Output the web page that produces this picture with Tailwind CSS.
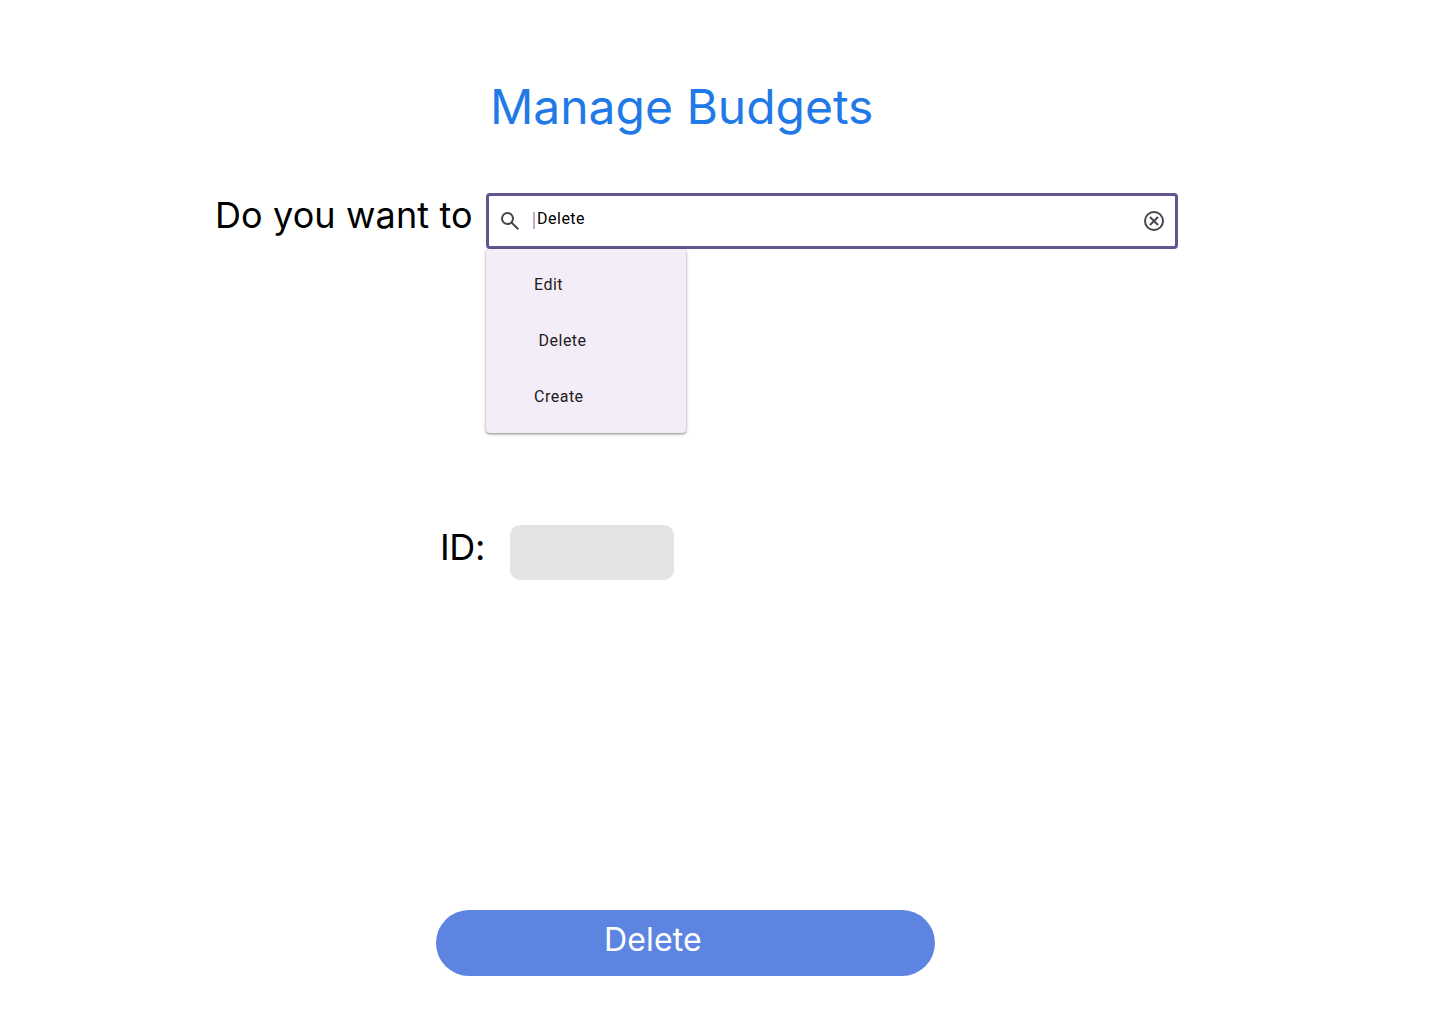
<!DOCTYPE html>
<html lang="en">
<head>
<meta charset="utf-8">
<title>Manage Budgets</title>
<script src="https://cdn.jsdelivr.net/npm/@tailwindcss/browser@4"></script>
</head>
<body class="bg-white">
<main class="flex h-[1024px] w-[1440px] flex-col overflow-hidden bg-white font-['Inter',sans-serif] text-black">
  <h1 class="mt-[78px] ml-[490px] h-[58px] text-[48px] leading-[58px] tracking-[-0.02px] whitespace-nowrap text-[#1f7ae8]">Manage Budgets</h1>
  <section class="mt-[57px] ml-[215px] flex h-[241px] items-start">
    <label class="w-[271px] text-[36px] leading-[44px] tracking-[0.11px] whitespace-nowrap">Do you want to</label>
    <div class="flex flex-col font-['Roboto',sans-serif] text-[16px] leading-6 tracking-[0.5px]">
      <div class="flex h-14 w-[692px] items-center rounded-[4px] border-3 border-[#65558f] px-[9px]">
        <svg class="size-6" viewBox="0 0 24 24" fill="#49454f"><path d="M19.6 21l-6.3-6.3A6.1 6.1 0 0 1 9.5 16q-2.725 0-4.612-1.888T3 9.5t1.888-4.612T9.5 3t4.613 1.888T16 9.5a6.1 6.1 0 0 1-1.3 3.8l6.3 6.3zM9.5 14q1.875 0 3.188-1.312T14 9.5t-1.312-3.188T9.5 5 6.313 6.313 5 9.5t1.313 3.188T9.5 14"/></svg>
        <span class="mb-px ml-[11px] h-[17px] w-[2px] bg-[#b7aed0]"></span>
        <span class="mb-1 ml-[2px] flex-1">Delete</span>
        <svg class="size-6" viewBox="0 0 24 24" fill="none" stroke="#49454f" stroke-width="2"><circle cx="12" cy="12" r="9"/><path d="M8 8l8 8M16 8l-8 8"/></svg>
      </div>
      <ul class="flex h-[184px] w-[200px] flex-col rounded-[4px] bg-[#f3edf7] py-2 pl-12 text-[#1d1b20] shadow-[0_1px_2px_rgba(0,0,0,0.3),0_1px_3px_1px_rgba(0,0,0,0.15)]">
        <li class="flex h-14 items-center">Edit</li>
        <li class="flex h-14 items-center pl-[4.5px]">Delete</li>
        <li class="flex h-14 items-center">Create</li>
      </ul>
    </div>
  </section>
  <section class="mt-[91px] ml-[440px] flex h-[55px]">
    <label class="w-[70px] text-[36px] leading-[44px] tracking-[-0.3px]">ID:</label>
    <div class="w-[164px] rounded-[10px] bg-[#e4e4e4]"></div>
  </section>
  <button class="mt-[330px] ml-[436px] h-[66px] w-[499px] rounded-full bg-[#5c84e0] pl-[168px] pb-[7px] text-left text-[32px] leading-[39px] tracking-[0.15px] text-white">Delete</button>
</main>
</body>
</html>
